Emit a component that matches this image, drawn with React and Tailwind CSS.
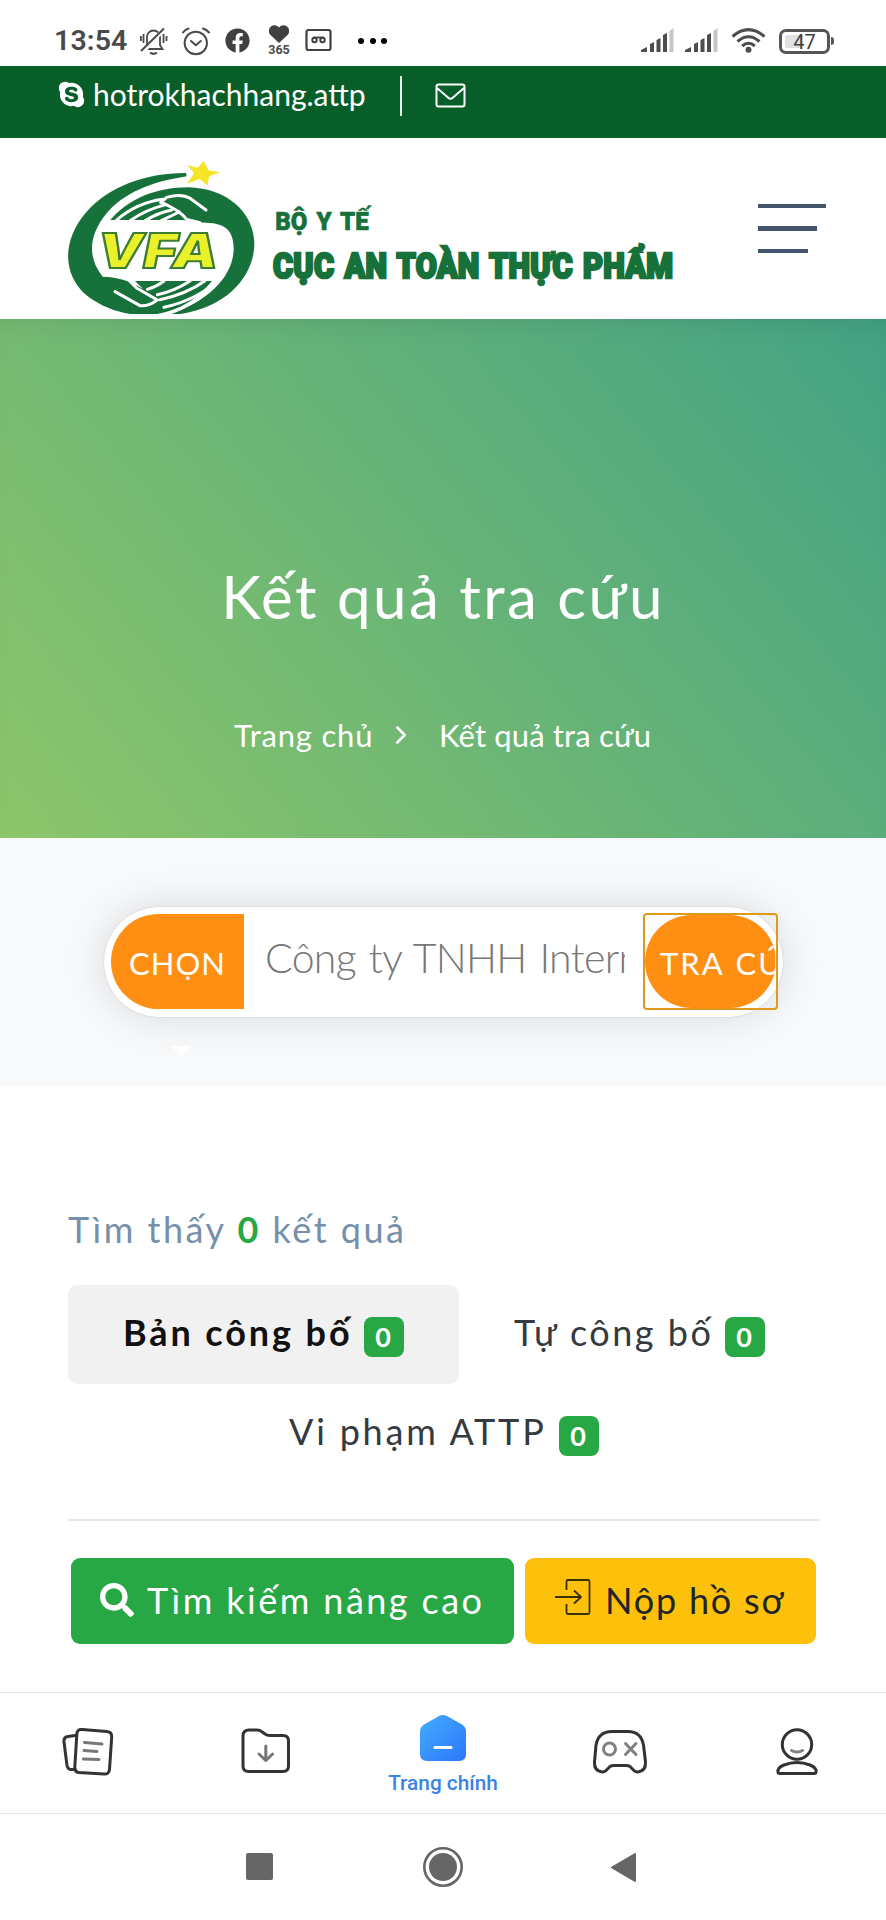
import { FaSkype, FaSearch, FaFacebook } from 'react-icons/fa'
import { ChevronRight } from 'lucide-react'

function SignalIcon({ className }) {
  return (
    <svg className={className} width="34" height="26" viewBox="0 0 34 26">
      <path d="M0 24v-2l6-3v5z" fill="#4d4d4d" />
      <path d="M9 24v-8l4-2v10zM15.500 24V12l4-2v14zM22 24V7l4-2v19z" fill="#4d4d4d" />
      <path d="M28.500 24V3l4-3v24z" fill="#c6c6c6" />
    </svg>
  )
}

function StatusBar() {
  return (
    <div className="flex h-[66px] items-start bg-white pl-[54px] text-[#4a4a4a]">
      <span className="mt-[22px] w-[73px] font-[Roboto] text-[28.500px] leading-[38px] font-semibold tracking-[0.1px]">13:54</span>
      {/* Muted bell */}
      <svg className="mt-[27px] ml-[13px] shrink-0" width="28" height="28" viewBox="0 0 28 28" fill="none" stroke="#4a4a4a" strokeWidth="1.800">
        <path d="M4.500 22h18l-2.500-4V10a6.500 6.500 0 0 0-13 0v8z" />
        <path d="M10 25.500c2 1.600 5 1.600 7 0" strokeWidth="2" />
        <path d="M3.500 7v9M.9 9v5M23.500 7v9M26.500 9v5" />
        <path d="M3 25 24 2" stroke="#fff" strokeWidth="4" />
        <path d="M1 24 24 1.500" strokeWidth="2" />
      </svg>
      {/* Alarm clock */}
      <svg className="mt-[26px] ml-[13px] shrink-0" width="30" height="30" viewBox="0 0 30 30" fill="none" stroke="#4a4a4a" strokeWidth="2" strokeLinecap="round" strokeLinejoin="round">
        <circle cx="14.800" cy="17" r="11.200" />
        <path d="m10 15 4.800 4.200 5-4.200M2 6.500Q4 3.500 7.500 2.500M22 2.500Q25.500 3.500 28 6.500" />
      </svg>
      <FaFacebook className="mt-7 ml-[14px] h-[25px] w-[25px] shrink-0 text-[#404040]" />
      <div className="mt-[25px] ml-[17px] flex w-[24px] shrink-0 flex-col items-center">
        <svg width="20" height="18" viewBox="0 0 20 18" fill="#404040">
          <path d="M10 18 1 9.500A5.300 5.300 0 0 1 10 2.500a5.300 5.300 0 0 1 9 7z" />
        </svg>
        <span className="font-[Roboto] text-[12.500px] leading-[13px] font-bold">365</span>
      </div>
      {/* Tape recorder */}
      <svg className="mt-7 ml-[14px] shrink-0" width="28" height="24" viewBox="0 0 28 24" fill="none" stroke="#404040" strokeWidth="2.200">
        <rect x="1.500" y="2" width="24" height="20" rx="2" />
        <circle cx="9.500" cy="12" r="2.200" strokeWidth="2" />
        <circle cx="17.500" cy="12" r="2.200" strokeWidth="2" />
        <path d="M8 9.500h11" strokeWidth="1.800" />
      </svg>
      <div className="mt-[37.500px] ml-[25px] flex w-[29px] shrink-0 justify-between">
        <i className="h-[6px] w-[6px] rounded-full bg-black" />
        <i className="h-[6px] w-[6px] rounded-full bg-black" />
        <i className="h-[6px] w-[6px] rounded-full bg-black" />
      </div>
      <div className="mr-[52px] ml-auto flex">
        <SignalIcon className="mt-7" />
        <SignalIcon className="mt-7 ml-[10px]" />
        <svg className="mt-7 ml-[12px]" width="36" height="26" viewBox="0 0 36 26" fill="none" stroke="#4d4d4d" strokeWidth="3">
          <path d="M1.500 8.500Q17.500-5.200 33.500 8.500M6.500 13.500Q17.500 4 28.500 13.500M11.200 18Q17.500 12.500 23.800 18" />
          <circle cx="17.500" cy="21.800" r="2" strokeWidth="2" fill="#4d4d4d" />
        </svg>
        <div className="mt-7 ml-3 flex items-center">
          <div className="flex h-[25px] w-[51px] rounded-[7px] border-[3px] border-[#555] p-[3px]">
            <span className="h-full w-full rounded-[2px] bg-linear-to-r from-[#e2e2e2] from-47% to-white to-47% text-center font-[Roboto] text-[20px] leading-[14px] text-[#404040]">47</span>
          </div>
          <i className="ml-px h-[8px] w-[3px] rounded-r bg-[#555]" />
        </div>
      </div>
    </div>
  )
}

function Logo() {
  return (
    <svg className="shrink-0" width="606" height="153" viewBox="84 63 1818 459">
      <g fill="#17713a">
        <path d="M438 99C320 98 205 140 140 215C65 300 66 405 142 468C215 523 310 538 385 514C440 498 482 465 516 423H285L310 447C260 418 230 412 188 410C140 350 148 285 198 222C250 160 330 126 440 109Z" />
        <path d="M211 240C265 178 345 142 445 142C560 145 640 215 643 308C645 405 560 515 384 526C500 485 577 415 581 330C582 275 560 250 500 248C455 247 440 240 420 240Z" />
      </g>
      <g fill="none" stroke="#fff" strokeWidth="9" strokeLinecap="round" strokeLinejoin="round">
        <path d="M228 242Q290 188 368 178M270 242Q320 208 378 194M315 242Q355 218 395 210M364 242L418 216" />
        <path d="M362 188 380 172Q425 160 450 175L498 210M366 188Q420 212 440 238L480 248" />
        <path d="M225 455 300 497Q325 500 352 480M352 480 290 444 270 424M352 464Q400 455 450 423M360 479Q440 462 494 423M322 448Q350 440 372 423M372 502Q470 480 530 423" />
      </g>
      <path d="m491 63 14 28 36 6-34 12-4 28-24-20-38 14 21-31-20-24 32 7z" fill="#f4e526" />
      <text x="172" y="384" textLength="362" lengthAdjust="spacingAndGlyphs" fontFamily="Inter, sans-serif" fontStyle="italic" fontWeight="900" fontSize="146" fill="#eaf02a" stroke="#3d7d33" strokeWidth="6">VFA</text>
      <g fontFamily="Roboto, sans-serif" fontWeight="900" fill="#17713a" stroke="#17713a">
        <text x="706" y="271" textLength="280" lengthAdjust="spacingAndGlyphs" fontSize="79" wordSpacing="10" strokeWidth="2">BỘ Y TẾ</text>
        <text x="699" y="413" textLength="1201" lengthAdjust="spacingAndGlyphs" fontSize="106" wordSpacing="8" letterSpacing="1" strokeWidth="8">CỤC AN TOÀN THỰC PHẨM</text>
      </g>
    </svg>
  )
}

function Badge({ children }) {
  return (
    <span className="flex h-[40px] w-[40px] shrink-0 items-center justify-center rounded-[8px] bg-[#28a745] pb-[2px] text-[27px] leading-none font-bold text-white">
      {children}
    </span>
  )
}

function SearchSection() {
  return (
    <section className="h-[248px] bg-[#f7f9fb] px-[103px] pt-[68px]">
      <div className="flex h-[112px] w-[681px] rounded-full border border-[#dcdfe2] bg-white p-[7px] shadow-[0_0_38px_rgba(0,0,0,0.13)]">
        <button className="h-[95px] w-[133px] shrink-0 rounded-l-full bg-[#ff8f13] pt-1 pl-[18px] text-left text-[31px] tracking-[1px] text-white">CHỌN</button>
        <div className="ml-[21px] w-[360px] shrink-0 overflow-hidden text-[41px] leading-[88px] font-light tracking-[-0.700px] whitespace-nowrap text-[#777] [word-spacing:2.500px]">Công ty TNHH International</div>
        <button className="-mt-px ml-[18px] h-[97px] w-[135px] shrink-0 rounded-[4px] border-2 border-[#dd9a1c]">
          <span className="block h-full w-full overflow-hidden rounded-full bg-[#ff8f13]">
            <span className="block pt-1 pl-[15px] text-left text-[31px] leading-[88px] tracking-[2px] whitespace-nowrap text-white [word-spacing:2px]">TRA CỨU</span>
          </span>
        </button>
      </div>
      <svg className="mt-[28px] ml-[67px]" width="22" height="10" viewBox="0 0 22 10">
        <path d="M1 0h20L11 10z" fill="#fff" />
      </svg>
    </section>
  )
}

function Results() {
  return (
    <main className="h-[606px] bg-white px-[67px] pt-[118px] text-[36px] tracking-[1.800px] text-[#343a40]">
      <p className="ml-px h-[50px] leading-[50px] tracking-[2.500px] whitespace-nowrap text-[#7690aa]">
        Tìm thấy <b className="text-[#28a745]">0</b> kết quả
      </p>
      <div className="mt-[31px] ml-px flex">
        <div className="flex h-[99px] w-[391px] items-center rounded-[9px] bg-[#f1f1f1] pt-[5px] pl-[55px] font-bold text-[#111]">
          <span className="-mt-[10px] w-[241px] tracking-[2.900px] whitespace-nowrap">Bản công bố</span>
          <Badge>0</Badge>
        </div>
        <div className="flex h-[99px] items-center pt-[5px] pl-[55px]">
          <span className="-mt-[10px] w-[211px] tracking-[2.500px] whitespace-nowrap">Tự công bố</span>
          <Badge>0</Badge>
        </div>
      </div>
      <div className="ml-px flex h-[99px] items-center pt-[5px] pl-[221px]">
        <span className="-mt-[10px] w-[270px] tracking-[2.800px] whitespace-nowrap">Vi phạm ATTP</span>
        <Badge>0</Badge>
      </div>
      <hr className="mt-[36px] ml-px border-t-2 border-[#e5e6e7]" />
      <div className="mt-[37px] ml-[4px] flex gap-[11px]">
        <button className="flex h-[86px] w-[443px] items-center rounded-[9px] bg-[#28a745] pl-[29px] whitespace-nowrap text-white">
          <FaSearch className="-mt-[3px] h-[34px] w-[34px]" />
          <span className="-mt-[3px] ml-[13px] tracking-[2.450px]">Tìm kiếm nâng cao</span>
        </button>
        <button className="flex h-[86px] w-[291px] items-center rounded-[9px] bg-[#fdc10b] pl-[29px] whitespace-nowrap text-[#212529]">
          <svg className="-mt-2" width="38" height="38" viewBox="0 0 38 38" fill="none" stroke="#3a3000" strokeWidth="1.800" strokeLinejoin="round">
            <path d="M12.500 12V3.500a1.500 1.500 0 0 1 1.500-1.500h20a1.500 1.500 0 0 1 1.500 1.500v31a1.500 1.500 0 0 1-1.500 1.500H14a1.500 1.500 0 0 1-1.500-1.500V26M1 19h26M20 12.500l7 6.500-7 6.500" />
          </svg>
          <span className="-mt-[3px] ml-[13px]">Nộp hồ sơ</span>
        </button>
      </div>
    </main>
  )
}

function BrowserTabs() {
  return (
    <nav className="grid h-[121px] grid-cols-5 justify-items-center border-t border-[#e4e4e4] bg-white">
      {/* News */}
      <svg className="mt-[34px] -ml-[1px]" width="52" height="50" viewBox="0 0 52 50" fill="none" stroke="#333" strokeWidth="3" strokeLinecap="round" strokeLinejoin="round">
        <path d="M13 8.500 6 9.500Q1.500 10 2 15l3 23.500Q6 43 10.500 42.500L13 42" />
        <path d="M20 2.500 45 4.500Q50 5 49.700 10L47.500 42.500Q47 47.500 42 47L17 45.500Q12.500 45 12.800 40.500L14.800 7.500Q15 2 20 2.500Z" />
        <path d="m22.500 15.500 17.500 1.500M22 23.500 35 24.500M21.500 32 37 32.500" stroke="#777" />
      </svg>
      {/* Downloads */}
      <svg className="mt-[35px] ml-px" width="50" height="47" viewBox="0 0 50 47" fill="none" stroke="#333" strokeWidth="3" strokeLinecap="round" strokeLinejoin="round">
        <path d="M2 8Q2 2 8 2h8q3 0 5 1.800L24 6q2 1.500 5 1.500H42Q47.500 7.500 47.500 13V38Q47.500 43.500 42 43.500H7.500Q2 43.500 2 38Z" />
        <path d="M24.800 18v14.500M18 26l6.800 6.500 6.800-6.500" stroke="#777" />
      </svg>
      <div className="flex flex-col items-center">
        <svg className="mt-[21px]" width="48" height="48" viewBox="0 0 48 48">
          <defs>
            <linearGradient id="home" x1="0" y1="0" x2="1" y2="1">
              <stop offset="0" stopColor="#45abff" />
              <stop offset="1" stopColor="#2b78fa" />
            </linearGradient>
          </defs>
          <path d="M20 2Q24 0 28 2L43 10.500Q47 13 47 17.500V40Q47 47 40 47H8Q1 47 1 40V17.500Q1 13 5 10.500Z" fill="url(#home)" />
          <path d="M16 33.500h16" stroke="#fff" strokeWidth="3" strokeLinecap="round" />
        </svg>
        <span className="mt-[8px] font-[Roboto] text-[20.800px] leading-[26px] font-medium whitespace-nowrap text-[#3a83e6]">Trang chính</span>
      </div>
      {/* Games */}
      <svg className="mt-[36px]" width="56" height="46" viewBox="0 0 56 46" fill="none" stroke="#333" strokeWidth="3" strokeLinejoin="round">
        <path d="M20 2.500H36Q49 2.500 51.500 16L53.500 33Q54 42 46 43Q42.500 43 40.500 40L38 37.500Q36.500 36.500 34 36.500H22Q19.500 36.500 18 37.500L15.500 40Q13.500 43 10 43Q2 42 2.500 33L4 16Q6.500 2.500 20 2.500Z" />
        <g stroke="#808080">
          <circle cx="17.500" cy="20" r="6" />
          <path d="m33.500 14.500 10.500 11m0-11-10.500 11" strokeLinecap="round" />
        </g>
      </svg>
      {/* Profile */}
      <svg className="mt-[35px]" width="44" height="48" viewBox="0 0 44 48" fill="none" stroke="#333" strokeWidth="3" strokeLinejoin="round">
        <circle cx="22" cy="16.500" r="14.700" />
        <path d="M16.500 22.500q5.500 3 11 0" stroke="#808080" strokeLinecap="round" />
        <path d="M3 44Q2 40 9 37Q22 32 35 37Q42 40 41 44Q41 45.500 39 45.500H5Q3 45.500 3 44Z" />
      </svg>
    </nav>
  )
}

function SystemNav() {
  return (
    <div className="flex h-[107px] border-t border-[#e4e4e4] bg-white pl-[246px]">
      <i className="mt-[39px] h-[27px] w-[27px] rounded-[2px] bg-[#666]" />
      <svg className="mt-[33px] ml-[150px]" width="40" height="40" viewBox="0 0 40 40">
        <circle cx="20" cy="20" r="18.700" fill="none" stroke="#666" strokeWidth="2.600" />
        <circle cx="20" cy="20" r="14" fill="#666" />
      </svg>
      <svg className="mt-[38px] ml-[147px]" width="28" height="31" viewBox="0 0 28 31">
        <path d="M2 15.500 25 2v27z" fill="#666" stroke="#666" strokeWidth="2" strokeLinejoin="round" />
      </svg>
    </div>
  )
}

export default function App() {
  return (
    <div className="h-[1920px] w-[886px] overflow-hidden bg-white font-[Lato,'Noto_Sans',sans-serif]">
      <StatusBar />
      <div className="flex h-[72px] bg-[#075e28] pl-[57px] text-white">
        <FaSkype className="mt-[14px] h-[29px] w-[29px]" />
        <span className="mt-[8px] ml-[7px] w-[307px] text-[30px] leading-[40px]">hotrokhachhang.attp</span>
        <i className="mt-[10px] h-[40px] w-[1.500px] bg-[#e6efe8]" />
        <svg className="mt-[17px] ml-[33px]" width="31" height="25" viewBox="0 0 31 25" fill="none" stroke="currentColor" strokeWidth="2" strokeLinejoin="round">
          <rect x="1.500" y="1.500" width="28" height="22" rx="2" />
          <path d="M2 5 13 14.500Q15.500 17 18 14.500L29 5" />
        </svg>
      </div>
      <header className="flex h-[181px] bg-white pt-[23px] pl-[68px]">
        <Logo />
        <div className="mt-[43px] ml-[84px] flex flex-col gap-[18px]">
          <i className="h-[4px] w-[68px] bg-[#44546c]" />
          <i className="h-[5px] w-[59px] bg-[#44546c]" />
          <i className="h-[4px] w-[50px] bg-[#44546c]" />
        </div>
      </header>
      <section className="flex h-[519px] flex-col items-center bg-linear-[50deg] from-[#8dc66a] to-[#43a284] text-white shadow-[inset_0_18px_30px_-20px_rgba(0,0,0,0.12)]">
        <h1 className="mt-[239px] text-[60px] leading-[76px] tracking-[2.500px] whitespace-nowrap">Kết quả tra cứu</h1>
        <div className="mt-[79px] flex w-[418px] items-center text-[31px] leading-[44px] whitespace-nowrap">
          <span className="w-[156px] tracking-[0.800px]">Trang chủ</span>
          <ChevronRight className="-ml-[4px] h-[30px] w-[30px]" strokeWidth={2} />
          <span className="ml-[23px] tracking-[0.150px]">Kết quả tra cứu</span>
        </div>
      </section>
      <SearchSection />
      <Results />
      <BrowserTabs />
      <SystemNav />
    </div>
  )
}
